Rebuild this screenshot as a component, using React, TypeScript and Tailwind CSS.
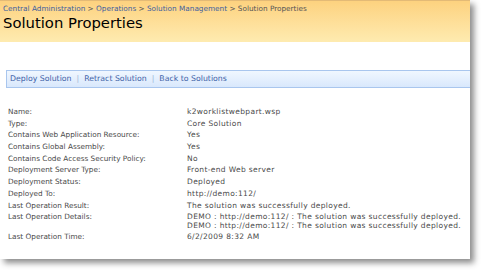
const rows: [string, string[]][] = [
  ['Name:', ['k2worklistwebpart.wsp']],
  ['Type:', ['Core Solution']],
  ['Contains Web Application Resource:', ['Yes']],
  ['Contains Global Assembly:', ['Yes']],
  ['Contains Code Access Security Policy:', ['No']],
  ['Deployment Server Type:', ['Front-end Web server']],
  ['Deployment Status:', ['Deployed']],
  ['Deployed To:', ['http://demo:112/']],
  ['Last Operation Result:', ['The solution was successfully deployed.']],
  [
    'Last Operation Details:',
    [
      'DEMO : http://demo:112/ : The solution was successfully deployed.',
      'DEMO : http://demo:112/ : The solution was successfully deployed.',
    ],
  ],
  ['Last Operation Time:', ['6/2/2009 8:32 AM']],
]

export default function App() {
  return (
    <div className="w-[482px] h-[270px] bg-white overflow-hidden font-['DejaVu_Sans',Verdana,sans-serif]">
      <div className="w-[470px] h-[259px] bg-white shadow-[4px_4px_6px_rgba(0,0,0,0.45)]">
        <div className="h-[42px] bg-gradient-to-b from-[#fdd27f] to-[#feebb0] border-t border-[#e3ba76] px-[3px] pt-[3px]">
          <div className="text-[7.3px] leading-[10px] text-[#555]">
            <span className="text-[#3f5f9f]">Central Administration</span> &gt;{' '}
            <span className="text-[#3f5f9f]">Operations</span> &gt;{' '}
            <span className="text-[#3f5f9f]">Solution Management</span> &gt; Solution Properties
          </div>
          <h1 className="text-[14.8px] leading-[18px] text-black">Solution Properties</h1>
        </div>

        <div className="mt-[28px] ml-[6px] h-[18px] flex items-center pl-[3px] border-y border-l border-[#a9c6ee] bg-gradient-to-b from-[#f0f7ff] to-[#d9e8fc] text-[7.8px] text-[#3f63a8]">
          <span>Deploy Solution</span>
          <span className="mx-[5px] text-[#9fb6d8]">|</span>
          <span>Retract Solution</span>
          <span className="mx-[5px] text-[#9fb6d8]">|</span>
          <span>Back to Solutions</span>
        </div>

        <div className="mt-[20px] px-[8px] grid grid-cols-[179px_1fr] gap-y-[3.2px] text-[7.3px] leading-[8.5px] text-[#4a4a4a]">
          {rows.map(([label, values]) => (
            <div key={label} className="contents">
              <div>{label}</div>
              <div className="text-[7.5px] tracking-[0.35px]">
                {values.map((v, i) => (
                  <div key={i}>{v}</div>
                ))}
              </div>
            </div>
          ))}
        </div>
      </div>
    </div>
  )
}
